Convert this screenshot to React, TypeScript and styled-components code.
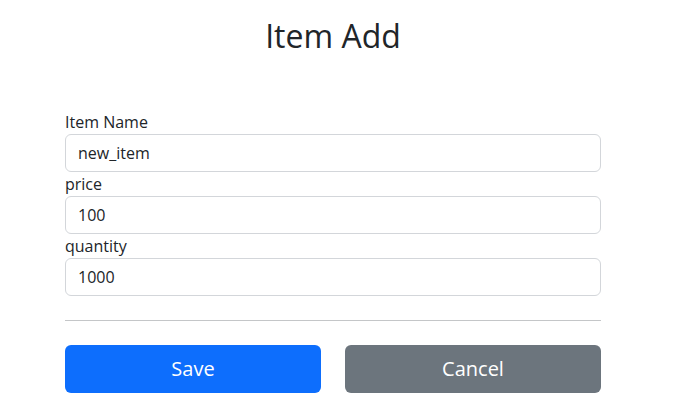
import React from 'react';
import styled, { createGlobalStyle } from 'styled-components';

const GlobalStyle = createGlobalStyle`
  * { box-sizing: border-box; }
  body {
    margin: 0;
    background: #fff;
    color: #212529;
    font-family: "Open Sans", "Noto Sans", "Noto Sans CJK KR", sans-serif;
    font-size: 16px;
    line-height: 1.5;
  }
`;

const Page = styled.div`
  width: 536px;
  margin-left: 65px;
  padding-top: 12px;
`;

const Title = styled.h1`
  margin: 0 0 50px;
  font-size: 32px;
  font-weight: 400;
  line-height: 48px;
  text-align: center;
`;

const Form = styled.form`
  display: flex;
  flex-direction: column;
`;

const Label = styled.label`
  display: block;
  line-height: 24px;
`;

const Input = styled.input`
  display: block;
  width: 100%;
  height: 38px;
  padding: 6px 12px;
  font: inherit;
  color: #212529;
  border: 1px solid #d3d6da;
  border-radius: 6px;
  background: #fff;
  outline: none;
`;

const Divider = styled.hr`
  margin: 24px 0;
  border: 0;
  border-top: 1px solid #c4c6c8;
`;

const ButtonRow = styled.div`
  display: grid;
  grid-template-columns: 1fr 1fr;
  gap: 24px;
`;

const Button = styled.button<{ $variant: 'primary' | 'secondary' }>`
  height: 48px;
  border: 0;
  border-radius: 6px;
  font: inherit;
  font-size: 20px;
  font-weight: 500;
  color: #fff;
  background: ${(p) => (p.$variant === 'primary' ? '#0d6efd' : '#6c757d')};
  cursor: pointer;
`;

const fields = [
  { id: 'name', label: 'Item Name', value: 'new_item' },
  { id: 'price', label: 'price', value: '100' },
  { id: 'quantity', label: 'quantity', value: '1000' },
];

export default function App() {
  return (
    <>
      <GlobalStyle />
      <Page>
        <Title>Item Add</Title>
        <Form onSubmit={(e) => e.preventDefault()}>
          {fields.map((f) => (
            <div key={f.id}>
              <Label htmlFor={f.id}>{f.label}</Label>
              <Input id={f.id} defaultValue={f.value} />
            </div>
          ))}
          <Divider />
          <ButtonRow>
            <Button type="submit" $variant="primary">Save</Button>
            <Button type="button" $variant="secondary">Cancel</Button>
          </ButtonRow>
        </Form>
      </Page>
    </>
  );
}
